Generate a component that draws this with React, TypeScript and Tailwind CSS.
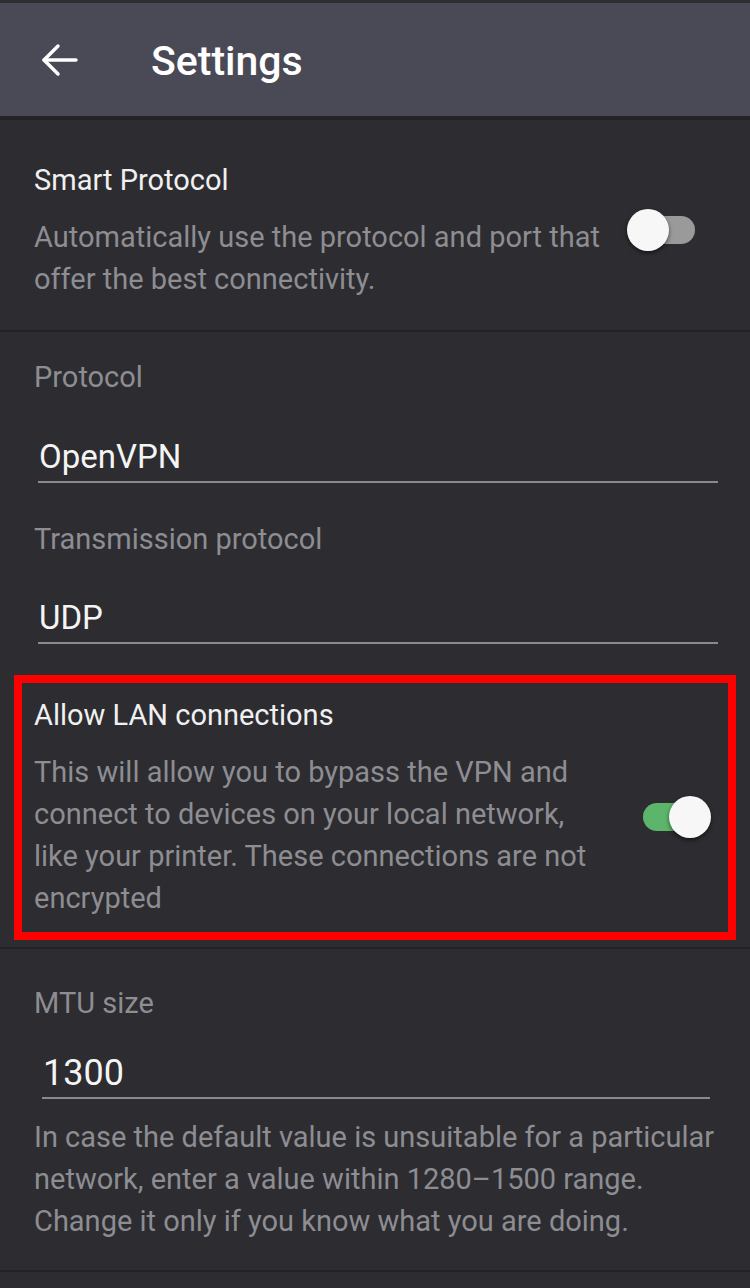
import React from 'react';

const Toggle: React.FC<{ on: boolean }> = ({ on }) => {
  if (on) {
    return (
      <div className="relative w-[68px] h-[42px] shrink-0">
        <div className="absolute left-0 top-[7px] w-[52px] h-[28px] rounded-full bg-[#5cb56a]" />
        <div className="absolute right-0 top-0 w-[42px] h-[42px] rounded-full bg-[#f7f7f7] shadow-[0_2px_4px_rgba(0,0,0,0.5)]" />
      </div>
    );
  }
  return (
    <div className="relative w-[68px] h-[42px] shrink-0">
      <div className="absolute right-0 top-[7px] w-[56px] h-[28px] rounded-full bg-[#9a9a9a]" />
      <div className="absolute left-0 top-0 w-[42px] h-[42px] rounded-full bg-[#f7f7f7] shadow-[0_2px_4px_rgba(0,0,0,0.5)]" />
    </div>
  );
};

const Field: React.FC<{ value: string; className?: string; textClass?: string }> = ({ value, className, textClass }) => (
  <div className={`border-b-2 border-[#8a8a8a] ${className ?? ''}`}>
    <div className={`h-[48px] leading-[48px] text-[#f4f4f4] pl-[1px] ${textClass ?? 'text-[33px]'}`}>{value}</div>
  </div>
);

export default function App() {
  return (
    <div
      className="w-[750px] min-h-[1288px] bg-[#2c2c31] overflow-hidden"
      style={{ fontFamily: 'Roboto, "Liberation Sans", sans-serif' }}
    >
      {/* Toolbar */}
      <div className="h-[120px] bg-[#4a4a56] border-t-[3px] border-[#2e2e33] border-b-[4px] border-b-[#232327] flex items-center">
        <div className="w-[151px] pl-[41px]">
          <svg width="37" height="34" viewBox="0 0 37 34" fill="none" stroke="#ffffff" strokeWidth="3.4" strokeLinecap="round" strokeLinejoin="round">
            <path d="M35 17H3" />
            <path d="M17 3L3 17l14 14" />
          </svg>
        </div>
        <div className="text-[41px] font-medium text-white leading-none mt-[3px]">Settings</div>
      </div>

      {/* Smart Protocol */}
      <div className="flex items-center pl-[34px] pr-[55px] pt-[40px] pb-[30px] border-b-2 border-[#232327]">
        <div className="flex-1 pr-[20px]">
          <div className="text-[29px] leading-[40px] text-[#f0f0f0]">Smart Protocol</div>
          <div className="mt-[16px] text-[29px] leading-[42px] text-[#8d8d92]">
            Automatically use the protocol and port that offer the best connectivity.
          </div>
        </div>
        <Toggle on={false} />
      </div>

      {/* Protocol settings */}
      <div className="pt-[25px] pb-[7px] border-b-2 border-[#232327]">
        <div className="pl-[34px] text-[29px] leading-[40px] text-[#8d8d92]">Protocol</div>
        <Field value="OpenVPN" className="mt-[36px] ml-[38px] mr-[32px]" />
        <div className="mt-[36px] pl-[34px] text-[29px] leading-[40px] text-[#8d8d92]">Transmission protocol</div>
        <Field value="UDP" className="mt-[35px] ml-[38px] mr-[32px]" />

        {/* Allow LAN (highlighted) */}
        <div className="mt-[31px] mx-[14px] border-[8px] border-[#ff0000] pl-[12px] pr-[17px] pt-[12px] pb-[13px] flex items-center">
          <div className="flex-1 pr-[30px]">
            <div className="text-[29px] leading-[40px] text-[#f0f0f0]">Allow LAN connections</div>
            <div className="mt-[16px] text-[29px] leading-[42px] text-[#8d8d92]">
              This will allow you to bypass the VPN and connect to devices on your local network, like your printer. These connections are not encrypted
            </div>
          </div>
          <div className="pt-[20px]">
            <Toggle on />
          </div>
        </div>
      </div>

      {/* MTU size */}
      <div className="pt-[34px] pb-[28px] border-b-2 border-[#232327]">
        <div className="pl-[34px] text-[29px] leading-[40px] text-[#8d8d92]">MTU size</div>
        <Field value="1300" textClass="text-[36px]" className="mt-[26px] ml-[42px] mr-[40px]" />
        <div className="mt-[17px] pl-[34px] pr-[30px] text-[29px] leading-[42px] text-[#8d8d92]">
          In case the default value is unsuitable for a particular network, enter a value within 1280–1500 range. Change it only if you know what you are doing.
        </div>
      </div>
    </div>
  );
}
